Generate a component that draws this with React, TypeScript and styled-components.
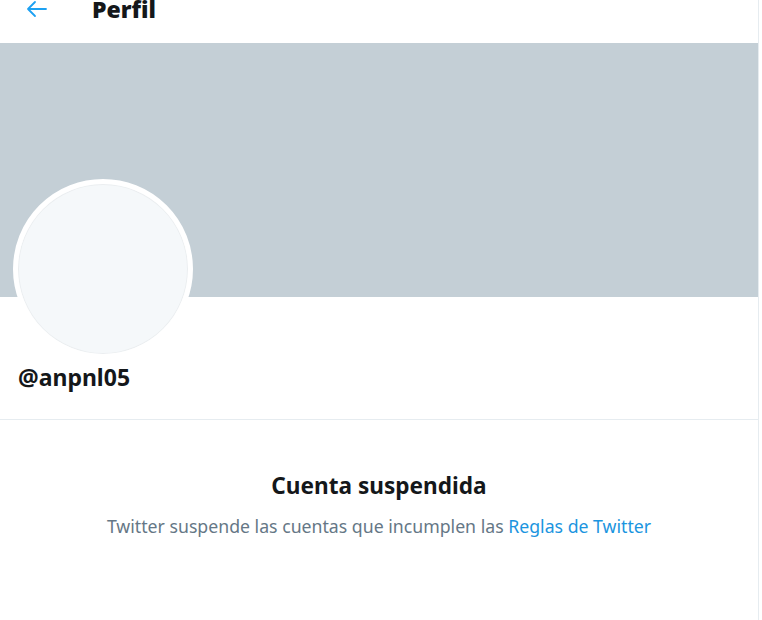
import styled, { createGlobalStyle } from 'styled-components';
import * as React from 'react';

const GlobalStyle = createGlobalStyle`
  html, body {
    margin: 0;
    padding: 0;
    background: #ffffff;
    font-family: "Noto Sans", "Open Sans", sans-serif;
  }
`;

const Column = styled.div`
  width: 758px;
  min-height: 620px;
  border-right: 1px solid #e6ecf0;
  overflow: hidden;
`;

const Header = styled.div`
  height: 43px;
  display: flex;
  align-items: flex-start;
  padding-left: 26px;
  box-sizing: border-box;
`;

const HeaderRow = styled.div`
  display: flex;
  align-items: center;
  gap: 44px;
  margin-top: -7px;
`;

const BackButton = styled.button`
  border: none;
  background: none;
  padding: 0;
  display: flex;
  color: #1da1f2;
  cursor: pointer;
`;

const Title = styled.h2`
  margin: 0;
  font-size: 23px;
  font-weight: 900;
  color: #14171a;
`;

const Banner = styled.div`
  height: 254px;
  background: #c4cfd6;
`;

const ProfileArea = styled.div`
  padding: 0 18px;
  border-bottom: 1px solid #e6ecf0;
`;

const Avatar = styled.div`
  width: 170px;
  height: 170px;
  margin-top: -118px;
  margin-left: -5px;
  border-radius: 50%;
  border: 5px solid #ffffff;
  background: #f5f8fa;
  box-shadow: inset 0 0 0 1px #ebeef0;
`;

const Handle = styled.div`
  margin-top: 2px;
  padding-bottom: 26px;
  font-size: 23px;
  font-weight: 700;
  color: #14171a;
`;

const Notice = styled.div`
  display: flex;
  flex-direction: column;
  align-items: center;
  padding-top: 50px;
`;

const NoticeTitle = styled.div`
  font-size: 22.6px;
  font-weight: 700;
  color: #14171a;
`;

const NoticeText = styled.div`
  margin-top: 13px;
  font-size: 17.7px;
  color: #657786;
  a {
    color: #1b95e0;
    text-decoration: none;
  }
`;

const BackArrow = () => (
  <svg width="22" height="22" viewBox="0 0 22 22" fill="none" stroke="currentColor" strokeWidth="1.8" strokeLinecap="round" strokeLinejoin="round">
    <path d="M20 11H2M9 4l-7 7 7 7" />
  </svg>
);

export default function App() {
  return (
    <Column>
      <GlobalStyle />
      <Header>
        <HeaderRow>
          <BackButton type="button">
            <BackArrow />
          </BackButton>
          <Title>Perfil</Title>
        </HeaderRow>
      </Header>
      <Banner />
      <ProfileArea>
        <Avatar />
        <Handle>@anpnl05</Handle>
      </ProfileArea>
      <Notice>
        <NoticeTitle>Cuenta suspendida</NoticeTitle>
        <NoticeText>
          Twitter suspende las cuentas que incumplen las <a href="#reglas">Reglas de Twitter</a>
        </NoticeText>
      </Notice>
    </Column>
  );
}
